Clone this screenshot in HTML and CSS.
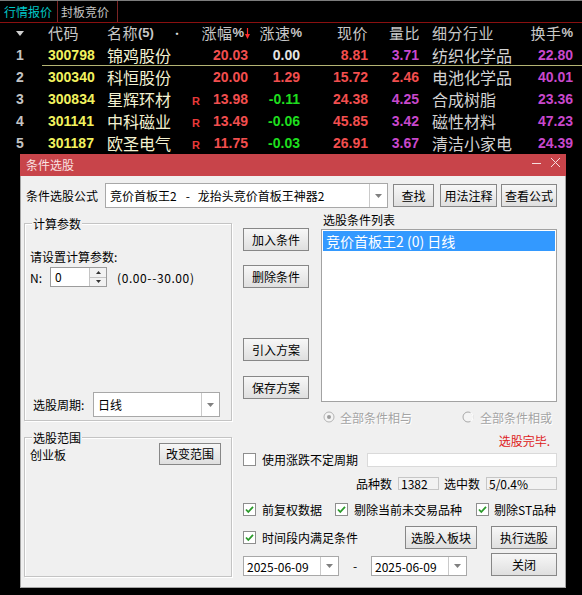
FILE: index.html
```html
<!DOCTYPE html>
<html lang="zh-CN">
<head>
<meta charset="utf-8">
<title>条件选股</title>
<link rel="stylesheet" href="styles.css">
</head>
<body>
<div class="screen">
  <div class="topline"></div>
  <div class="tabs">
    <div class="tab active">行情报价</div>
    <div class="tab">封板竞价</div>
  </div>
  <div class="quote">
    <div class="qrow head">
      <div class="c cnum"><svg class="sort" width="8" height="5" viewBox="0 0 8 5"><polygon points="0,0 8,0 4,5" fill="#d0d0d0"/></svg></div>
      <div class="c ccode">代码</div>
      <div class="c cname">名称<b class="hb">(5)</b><span class="dot">•</span></div>
      <div class="c cpct hpct">涨幅<b class="hb">%</b><svg class="arrow" width="5" height="11" viewBox="0 0 5 11"><line x1="2.5" y1="0" x2="2.5" y2="7" stroke="#ff2a2a" stroke-width="1.2"/><polygon points="0,6 5,6 2.5,11" fill="#ff2a2a"/></svg></div>
      <div class="c cspd hr0">涨速<b class="hb">%</b></div>
      <div class="c cprice">现价</div>
      <div class="c cvr hr1">量比</div>
      <div class="c cind">细分行业</div>
      <div class="c cturn">换手<b class="hb">%</b></div>
    </div>
    <div class="qrow sel">
      <div class="c cnum n">1</div>
      <div class="c ccode n y">300798</div>
      <div class="c cname nm">锦鸡股份</div>
      <div class="c cpct n red"><span class="rtag"></span>20.03</div>
      <div class="c cspd n wht">0.00</div>
      <div class="c cprice n red">8.81</div>
      <div class="c cvr n mag">3.71</div>
      <div class="c cind ind">纺织化学品</div>
      <div class="c cturn n mag">22.80</div>
    </div>
    <div class="qrow">
      <div class="c cnum n">2</div>
      <div class="c ccode n y">300340</div>
      <div class="c cname nm">科恒股份</div>
      <div class="c cpct n red"><span class="rtag"></span>20.00</div>
      <div class="c cspd n red">1.29</div>
      <div class="c cprice n red">15.72</div>
      <div class="c cvr n red">2.46</div>
      <div class="c cind ind">电池化学品</div>
      <div class="c cturn n mag">40.01</div>
    </div>
    <div class="qrow">
      <div class="c cnum n">3</div>
      <div class="c ccode n y">300834</div>
      <div class="c cname nm">星辉环材</div>
      <div class="c cpct n red"><span class="rtag">R</span>13.98</div>
      <div class="c cspd n grn">-0.11</div>
      <div class="c cprice n red">24.38</div>
      <div class="c cvr n mag">4.25</div>
      <div class="c cind ind">合成树脂</div>
      <div class="c cturn n mag">23.36</div>
    </div>
    <div class="qrow">
      <div class="c cnum n">4</div>
      <div class="c ccode n y">301141</div>
      <div class="c cname nm">中科磁业</div>
      <div class="c cpct n red"><span class="rtag">R</span>13.49</div>
      <div class="c cspd n grn">-0.06</div>
      <div class="c cprice n red">45.85</div>
      <div class="c cvr n mag">3.42</div>
      <div class="c cind ind">磁性材料</div>
      <div class="c cturn n mag">47.23</div>
    </div>
    <div class="qrow">
      <div class="c cnum n">5</div>
      <div class="c ccode n y">301187</div>
      <div class="c cname nm">欧圣电气</div>
      <div class="c cpct n red"><span class="rtag">R</span>11.75</div>
      <div class="c cspd n grn">-0.03</div>
      <div class="c cprice n red">26.91</div>
      <div class="c cvr n mag">3.67</div>
      <div class="c cind ind">清洁小家电</div>
      <div class="c cturn n mag">24.39</div>
    </div>
  </div>

  <div class="dialog">
    <div class="titlebar">
      <span class="title">条件选股</span>
      <svg class="winbtns" width="34" height="22" viewBox="0 0 34 22">
        <line x1="5" y1="9.5" x2="14" y2="9.5" stroke="#f6dede" stroke-width="1"/>
        <line x1="24" y1="4" x2="33" y2="13" stroke="#f6dede" stroke-width="1"/>
        <line x1="33" y1="4" x2="24" y2="13" stroke="#f6dede" stroke-width="1"/>
      </svg>
    </div>
    <div class="dbody">
      <div class="formula-row">
        <span class="formula-lbl">条件选股公式</span>
        <div class="combo formula-combo">
          <span class="combo-text">竞价首板王2<span class="sep">-</span>龙抬头竞价首板王神器2</span>
          <span class="combo-btn"><svg width="7" height="4" viewBox="0 0 7 4"><polygon points="0,0 7,0 3.5,4" fill="#808080"/></svg></span>
        </div>
        <button class="btn b-find">查找</button>
        <button class="btn b-usage">用法注释</button>
        <button class="btn b-view">查看公式</button>
      </div>

      <div class="main">
        <div class="leftcol">
          <div class="group g-params">
            <span class="legend">计算参数</span>
            <div class="hint">请设置计算参数:</div>
            <div class="param-row">
              <span class="nlbl">N:</span>
              <div class="spin">
                <span class="spin-val">0</span>
                <div class="spin-btns">
                  <span class="sb"><svg width="5" height="3" viewBox="0 0 5 3"><polygon points="0,3 5,3 2.5,0" fill="#333"/></svg></span>
                  <span class="sb"><svg width="5" height="3" viewBox="0 0 5 3"><polygon points="0,0 5,0 2.5,3" fill="#333"/></svg></span>
                </div>
              </div>
              <span class="range">(0.00--30.00)</span>
            </div>
            <div class="period-row">
              <span class="period-lbl">选股周期:</span>
              <div class="combo period-combo">
                <span class="combo-text">日线</span>
                <span class="combo-btn"><svg width="7" height="4" viewBox="0 0 7 4"><polygon points="0,0 7,0 3.5,4" fill="#808080"/></svg></span>
              </div>
            </div>
          </div>
          <div class="group g-scope">
            <span class="legend">选股范围</span>
            <div class="scope-row">
              <span>创业板</span>
              <button class="btn b-scope">改变范围</button>
            </div>
          </div>
        </div>

        <div class="rightcol">
          <div class="top">
            <div class="btncol">
              <button class="btn b-side b-add">加入条件</button>
              <button class="btn b-side b-del">删除条件</button>
              <button class="btn b-side b-imp">引入方案</button>
              <button class="btn b-side b-save">保存方案</button>
            </div>
            <div class="listcol">
              <div class="list-lbl">选股条件列表</div>
              <div class="listbox">
                <div class="item selitem">竞价首板王2 (0) 日线</div>
              </div>
            </div>
          </div>

          <div class="radio-row">
            <span class="radio r1">
              <svg width="12" height="12" viewBox="0 0 12 12"><circle cx="6" cy="6" r="5" fill="#f4f4f4" stroke="#b4b4b4"/><circle cx="6" cy="6" r="2" fill="#9c9c9c"/></svg>
              <span class="dis">全部条件相与</span>
            </span>
            <span class="radio r2">
              <svg width="12" height="12" viewBox="0 0 12 12"><circle cx="6" cy="6" r="5" fill="#f4f4f4" stroke="#a8a8a8"/><path d="M8.5 1.7 A5 5 0 0 1 8.5 10.3" fill="none" stroke="#fafafa" stroke-width="1.4"/></svg>
              <span class="dis">全部条件相或</span>
            </span>
          </div>

          <div class="status">选股完毕.</div>

          <div class="cb-row1">
            <span class="cb"><svg width="13" height="13" viewBox="0 0 13 13"><rect x="0.5" y="0.5" width="12" height="12" fill="#fff" stroke="#8e8e8e"/></svg></span>
            <span class="cb-text">使用涨跌不定周期</span>
            <span class="edit"></span>
          </div>

          <div class="count-row">
            <span>品种数</span>
            <span class="rbox rb1">1382</span>
            <span class="cnt2">选中数</span>
            <span class="rbox rb2">5/0.4%</span>
          </div>

          <div class="cb-row2">
            <span class="cbitem ci1">
              <span class="cb"><svg width="13" height="13" viewBox="0 0 13 13"><rect x="0.5" y="0.5" width="12" height="12" fill="#fff" stroke="#8e8e8e"/><path d="M3 6.5 L5.3 9 L10 3.8" fill="none" stroke="#2a9a2a" stroke-width="1.8"/></svg></span>
              <span class="cb-text">前复权数据</span>
            </span>
            <span class="cbitem ci2">
              <span class="cb"><svg width="13" height="13" viewBox="0 0 13 13"><rect x="0.5" y="0.5" width="12" height="12" fill="#fff" stroke="#8e8e8e"/><path d="M3 6.5 L5.3 9 L10 3.8" fill="none" stroke="#2a9a2a" stroke-width="1.8"/></svg></span>
              <span class="cb-text">剔除当前未交易品种</span>
            </span>
            <span class="cbitem ci3">
              <span class="cb"><svg width="13" height="13" viewBox="0 0 13 13"><rect x="0.5" y="0.5" width="12" height="12" fill="#fff" stroke="#8e8e8e"/><path d="M3 6.5 L5.3 9 L10 3.8" fill="none" stroke="#2a9a2a" stroke-width="1.8"/></svg></span>
              <span class="cb-text ci3t">剔除ST品种</span>
            </span>
          </div>

          <div class="act-row">
            <span class="cbitem">
              <span class="cb"><svg width="13" height="13" viewBox="0 0 13 13"><rect x="0.5" y="0.5" width="12" height="12" fill="#fff" stroke="#8e8e8e"/><path d="M3 6.5 L5.3 9 L10 3.8" fill="none" stroke="#2a9a2a" stroke-width="1.8"/></svg></span>
              <span class="cb-text">时间段内满足条件</span>
            </span>
            <button class="btn b-board">选股入板块</button>
            <button class="btn b-run">执行选股</button>
          </div>

          <div class="date-row">
            <div class="combo date-combo">
              <span class="combo-text">2025-06-09</span>
              <span class="combo-btn"><svg width="7" height="4" viewBox="0 0 7 4"><polygon points="0,0 7,0 3.5,4" fill="#808080"/></svg></span>
            </div>
            <span class="dash">-</span>
            <div class="combo date-combo">
              <span class="combo-text">2025-06-09</span>
              <span class="combo-btn"><svg width="7" height="4" viewBox="0 0 7 4"><polygon points="0,0 7,0 3.5,4" fill="#808080"/></svg></span>
            </div>
            <button class="btn b-close">关闭</button>
          </div>
        </div>
      </div>
    </div>
  </div>
</div>
</body>
</html>
```

FILE: styles.css
```css
* { box-sizing: border-box; }
html, body { margin: 0; padding: 0; }
body {
  background: #000;
  width: 582px;
  height: 595px;
  overflow: hidden;
  font-family: "Noto Sans CJK SC", "Liberation Sans", sans-serif;
}
.screen { position: relative; width: 582px; height: 595px; }
.topline { height: 1px; background: #7c7c7c; }

/* tabs */
.tabs { display: flex; height: 22px; border-bottom: 1px solid #8a1010; }
.tab {
  width: 58px; height: 21px; padding-left: 4px;
  border-right: 1px solid #7a2424;
  font-size: 12px; line-height: 21px; color: #c4c4c4;
}
.tab.active { width: 58px; color: #00c8c8; }
.tab + .tab { width: 60px; padding-left: 3px; }

/* quote table */
.qrow {
  display: grid;
  grid-template-columns: 42px 60px 83px 65px 52px 68px 51px 89px 65px 7px;
  height: 22px;
  align-items: center;
}
.qrow.head { height: 21px; padding-bottom: 1px; }
.qrow.sel { position: relative; }
.qrow.sel::after {
  content: ""; position: absolute; left: 42px; right: 0; bottom: 0; height: 1px; background: #b4b474;
}
.c { white-space: nowrap; height: 100%; display: flex; align-items: center; line-height: 16px; }
.head .c { font-size: 15px; color: #c8c8c8; letter-spacing: 0.5px; }
.hb { font-family: "Liberation Sans", sans-serif; font-weight: bold; font-size: 13px; letter-spacing: 0; }
.cnum { justify-content: center; padding-right: 2px; }
.ccode { padding-left: 6px; }
.cname { padding-left: 5px; }
.cname .dot { margin-left: auto; margin-right: 2px; font-size: 11px; color: #e0e0e0; }
.cpct { justify-content: space-between; padding-right: 2px; }
.hpct { justify-content: flex-end; padding-right: 0; }
.arrow { margin-left: 1px; }
.cspd, .cprice, .cvr, .cturn { justify-content: flex-end; padding-right: 2px; }
.hr0 { padding-right: 0; }
.hr1 { padding-right: 1px; }
.cind { padding-left: 11px; }

.n { font-family: "Liberation Sans", sans-serif; font-weight: bold; font-size: 14px; }
.cnum.n { color: #c4c4c4; }
.y { color: #f2f25e; }
.nm { font-size: 16px; color: #f4f2d2; }
.red { color: #f24e4e; }
.grn { color: #1ede1e; }
.wht { color: #e4e4e4; }
.mag { color: #c848cc; }
.ind { font-size: 16px; color: #d2d2d2; }
.rtag {
  margin-left: 7px; align-self: flex-end; padding-bottom: 3px;
  font-size: 11px; line-height: 1; color: #e83a3a;
}

/* dialog */
.dialog {
  position: absolute; left: 20px; top: 154px;
  width: 546px; height: 434px;
  font-size: 12px; color: #000;
}
.titlebar {
  height: 22px; background: #c8444a;
  display: flex; align-items: center; justify-content: space-between;
  padding-left: 6px; padding-right: 5px;
}
.title { color: #fae2e2; font-size: 12px; line-height: 22px; }
.winbtns { display: block; }
.dbody {
  height: 412px; background: #f0f0f0;
  border: 1px solid #a4a4a4; border-top: none;
  padding: 7px 8px 0 3px;
}
button { font-family: inherit; margin: 0; padding: 0; }
.btn {
  font-size: 12px; color: #000;
  border: 1px solid #878787;
  background: linear-gradient(#f7f7f7, #dfdfdf);
  height: 23px; line-height: 20px; text-align: center;
}

.combo {
  display: flex; background: #fff; border: 1px solid #a8a8a8;
}
.combo-text { flex: 1; padding-left: 4px; white-space: nowrap; overflow: hidden; display: flex; align-items: center; }
.sep { margin: 0 8px 0 9px; }
.combo-btn {
  width: 18px; border-left: 1px solid #cacaca;
  display: flex; align-items: center; justify-content: center;
}

.formula-row { display: flex; align-items: center; height: 25px; }
.formula-lbl { margin-left: 2px; width: 79px; }
.formula-combo { width: 283px; height: 25px; }
.formula-combo .combo-text { padding-left: 4px; }
.b-find { margin-left: 5px; width: 41px; }
.b-usage { margin-left: 6px; width: 57px; }
.b-view { margin-left: 4px; width: 56px; }

.main { display: flex; gap: 11px; }
.leftcol { width: 208px; padding-top: 15px; }
.group {
  position: relative;
  border: 1px solid #c4c4c4;
  box-shadow: inset 1px 1px 0 #fff, 1px 1px 0 #fff;
}
.legend {
  position: absolute; top: -9px; left: 7px;
  padding: 0 1px; background: #f0f0f0; line-height: 17px;
}
.g-params {
  height: 198px; margin-bottom: 16px;
  display: flex; flex-direction: column;
  padding: 24px 5px 3px 5px;
}
.hint { line-height: 17px; }
.param-row { display: flex; align-items: center; height: 20px; margin-top: 2px; }
.nlbl { width: 20px; }
.spin { display: flex; width: 57px; height: 20px; border: 1px solid #9c9c9c; background: #fff; }
.spin-val { flex: 1; padding-left: 4px; line-height: 18px; }
.spin-btns { width: 17px; display: flex; flex-direction: column; border-left: 1px solid #c4c4c4; }
.sb {
  flex: 1; display: flex; align-items: center; justify-content: center;
  background: #f2f2f2;
}
.sb + .sb { border-top: 1px solid #c4c4c4; }
.range { margin-left: 10px; letter-spacing: 0.6px; }
.period-row { margin-top: auto; display: flex; align-items: center; height: 25px; }
.period-lbl { margin-left: 3px; width: 60px; }
.period-combo { width: 127px; height: 25px; }

.g-scope { height: 140px; padding: 5px 10px 0 5px; }
.scope-row { display: flex; align-items: center; justify-content: space-between; height: 22px; }
.b-scope { width: 62px; height: 22px; }

.rightcol { width: 314px; display: flex; flex-direction: column; }
.top { display: flex; height: 194px; }
.btncol { width: 66px; padding-top: 20px; display: flex; flex-direction: column; }
.b-side { width: 66px; height: 23px; }
.b-del { margin-top: 14px; }
.b-imp { margin-top: 50px; }
.b-save { margin-top: 15px; }
.listcol { margin-left: 12px; width: 236px; }
.list-lbl { margin-top: 3px; line-height: 17px; padding-left: 2px; }
.listbox { margin-top: 1px; height: 173px; background: #fff; border: 1px solid #a2a2a2; padding: 1px; }
.item { height: 20px; line-height: 20px; padding-left: 3px; font-size: 14px; }
.selitem { background: #3399ff; color: #fff; }

.radio-row { margin-top: 7px; height: 16px; display: flex; align-items: center; padding-left: 80px; }
.radio { display: flex; align-items: center; }
.radio svg { margin-right: 5px; }
.r1 { width: 139px; }
.r2 svg { margin-right: 6px; }
.dis { color: #a4a4a4; text-shadow: 1px 1px 0 #fff; }

.status { margin-top: 7px; line-height: 17px; text-align: right; padding-right: 7px; color: #de2020; }

.cb { display: flex; width: 13px; height: 13px; }
.cb-text { margin-left: 6px; white-space: nowrap; }
.cb-row1 { margin-top: 3px; height: 15px; display: flex; align-items: center; }
.edit { margin-left: auto; width: 190px; height: 14px; background: #fff; border: 1px solid #dadada; }

.count-row { margin-top: 10px; height: 13px; display: flex; align-items: center; justify-content: flex-end; }
.rbox {
  height: 13px; border: 1px solid #c6c6c6; background: #f2f2f2;
  display: flex; align-items: center; padding-left: 2px; margin-left: 6px;
}
.rb1 { width: 41px; }
.rb2 { width: 71px; }
.cnt2 { margin-left: 5px; }

.cb-row2 { margin-top: 13px; height: 13px; display: flex; align-items: center; }
.cbitem { display: flex; align-items: center; }
.ci1 { width: 92px; }
.ci2 { width: 141px; }
.ci3t { margin-left: 5px; }

.act-row { margin-top: 10px; height: 23px; display: flex; align-items: center; }
.b-board { margin-left: auto; width: 72px; }
.b-run { margin-left: 14px; width: 66px; }

.date-row { margin-top: 4px; height: 23px; display: flex; align-items: flex-end; }
.date-combo { width: 96px; height: 20px; }
.date-combo .combo-text { padding-left: 3px; }
.dash { width: 32px; text-align: center; line-height: 20px; }
.b-close { margin-left: auto; width: 66px; }
```
